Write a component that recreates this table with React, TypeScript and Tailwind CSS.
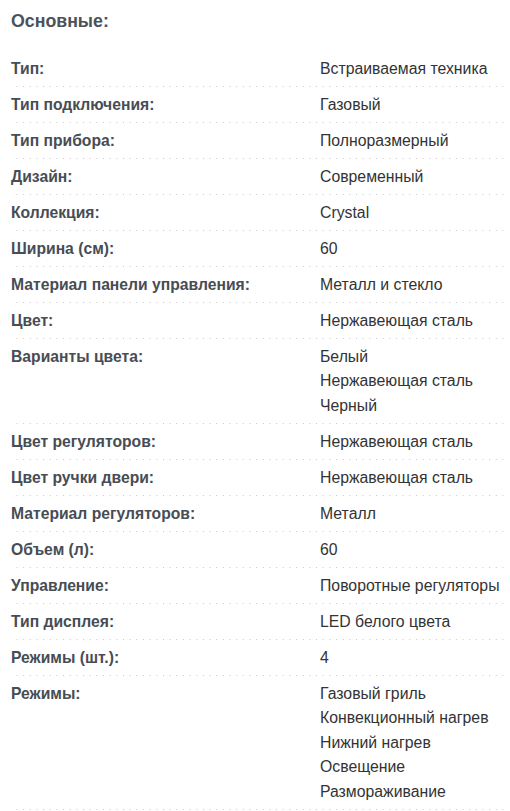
import React from "react";

const rows: [string, string[]][] = [
  ["Тип:", ["Встраиваемая техника"]],
  ["Тип подключения:", ["Газовый"]],
  ["Тип прибора:", ["Полноразмерный"]],
  ["Дизайн:", ["Современный"]],
  ["Коллекция:", ["Crystal"]],
  ["Ширина (см):", ["60"]],
  ["Материал панели управления:", ["Металл и стекло"]],
  ["Цвет:", ["Нержавеющая сталь"]],
  ["Варианты цвета:", ["Белый", "Нержавеющая сталь", "Черный"]],
  ["Цвет регуляторов:", ["Нержавеющая сталь"]],
  ["Цвет ручки двери:", ["Нержавеющая сталь"]],
  ["Материал регуляторов:", ["Металл"]],
  ["Объем (л):", ["60"]],
  ["Управление:", ["Поворотные регуляторы"]],
  ["Тип дисплея:", ["LED белого цвета"]],
  ["Режимы (шт.):", ["4"]],
  ["Режимы:", ["Газовый гриль", "Конвекционный нагрев", "Нижний нагрев", "Освещение", "Размораживание"]],
];

export default function App() {
  return (
    <div className="w-[510px] bg-white pl-[11px] pr-[2px] font-['Liberation_Sans',Arial,sans-serif]">
      <div className="pt-[9px] mb-[18px] text-[17.75px] leading-[24px] font-bold text-[#4b5259]">Основные:</div>
      <div>
        {rows.map(([label, vals], i) => (
          <div
            key={i}
            className="grid grid-cols-[309px_1fr] pt-[5.5px] pb-[6px] leading-[24.5px] bg-[linear-gradient(to_right,#c8c8c8_1px,transparent_1px)] bg-[length:6.67px_1px] bg-repeat-x bg-bottom"
          >
            <div className="font-bold text-[15.7px] text-[#474d54]">{label}</div>
            <div className="text-[15.8px] text-[#333]">
              {vals.map((v, j) => (
                <div key={j}>{v}</div>
              ))}
            </div>
          </div>
        ))}
      </div>
    </div>
  );
}
